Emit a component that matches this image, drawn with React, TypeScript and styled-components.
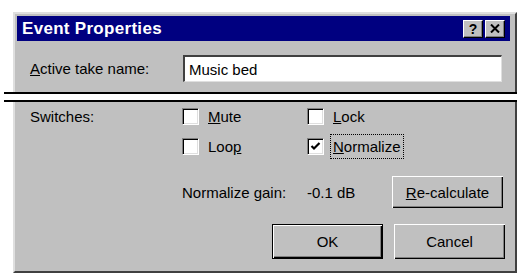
import React from 'react'
import styled, { createGlobalStyle } from 'styled-components'

const GlobalStyle = createGlobalStyle`
  html, body {
    margin: 0;
    padding: 0;
    background: #ffffff;
  }
  body {
    font-family: "Liberation Sans", Arial, sans-serif;
    font-size: 15px;
    color: #000;
  }
`

const Page = styled.div`
  width: 523px;
  height: 276px;
  padding: 12px 0 0 13px;
  box-sizing: border-box;
  overflow: hidden;
`

const Dialog = styled.div`
  width: 504px;
  display: flex;
  flex-direction: column;
`

const TopPane = styled.div`
  background: #c0c0c0;
  border-top: 2px solid #dfdfdf;
  border-left: 2px solid #dfdfdf;
  border-right: 2px solid #404040;
  padding: 2px 2px 0;
`

const TitleBar = styled.div`
  height: 25px;
  background: #000080;
  display: flex;
  align-items: center;
  justify-content: space-between;
  padding: 0 5px 0 5px;
  margin-right: 3px;
`

const Title = styled.span`
  color: #fff;
  font-weight: bold;
  font-size: 17px;
  letter-spacing: 0.3px;
`

const TitleButtons = styled.div`
  display: flex;
  gap: 2px;
`

const TitleButton = styled.div`
  width: 20px;
  height: 18px;
  box-sizing: border-box;
  background: #c0c0c0;
  border-top: 1px solid #fff;
  border-left: 1px solid #fff;
  border-right: 1px solid #000;
  border-bottom: 1px solid #000;
  box-shadow: inset -1px -1px 0 #808080;
  display: flex;
  align-items: center;
  justify-content: center;
  font-weight: bold;
  font-size: 14px;
  line-height: 1;
  color: #000;
`

const NameRow = styled.div`
  display: flex;
  align-items: center;
  padding: 14px 11px 10px 13px;
`

const FieldLabel = styled.span`
  width: 153px;
  flex: none;
`

const TextField = styled.div`
  flex: 1;
  height: 27px;
  box-sizing: border-box;
  background: #fff;
  border-top: 2px solid #404040;
  border-left: 2px solid #404040;
  border-right: 1px solid #dfdfdf;
  border-bottom: 1px solid #dfdfdf;
  display: flex;
  align-items: center;
  padding-left: 4px;
`

const Tear = styled.div`
  margin-left: -9px;
  width: 513px;
  height: 6px;
  background: #fff;
  border-top: 2px solid #000;
  border-bottom: 2px solid #000;
`

const BottomPane = styled.div`
  background: #c0c0c0;
  border-left: 2px solid #dfdfdf;
  border-right: 2px solid #404040;
  border-bottom: 2px solid #404040;
  padding: 3px 10px 12px 15px;
  display: flex;
  flex-direction: column;
`

const Grid = styled.div`
  display: grid;
  grid-template-columns: 152px 125px 85px 111px;
  grid-template-rows: 22px 22px 43px;
  row-gap: 8px;
  align-items: center;
`

const Cell = styled.div<{ $col: number; $span?: number; $bottom?: boolean }>`
  grid-column: ${(p) => p.$col} / span ${(p) => p.$span ?? 1};
  display: flex;
  align-items: center;
  align-self: ${(p) => (p.$bottom ? 'end' : 'center')};
  height: ${(p) => (p.$bottom ? '32px' : 'auto')};
`

const Check = styled.div`
  width: 17px;
  height: 17px;
  box-sizing: border-box;
  background: #fff;
  border-top: 1px solid #808080;
  border-left: 1px solid #808080;
  border-right: 1px solid #fff;
  border-bottom: 1px solid #fff;
  box-shadow: inset 1px 1px 0 #000, inset -1px -1px 0 #dfdfdf;
  display: flex;
  align-items: center;
  justify-content: center;
  flex: none;
`

const CheckLabel = styled.span<{ $focused?: boolean }>`
  margin-left: 6px;
  padding: 3px 2px;
  border: 1px dotted ${(p) => (p.$focused ? '#000' : 'transparent')};
`

const Button = styled.button<{ $default?: boolean }>`
  width: 111px;
  height: ${(p) => (p.$default ? '35px' : '32px')};
  box-sizing: border-box;
  background: #c0c0c0;
  font-family: "Liberation Sans", Arial, sans-serif;
  font-size: 15px;
  color: #000;
  padding: 0;
  border: ${(p) => (p.$default ? '1px solid #000' : 'none')};
  box-shadow: inset 1px 1px 0 #fff, inset -1px -1px 0 #000,
    inset -2px -2px 0 #808080;
`

const ButtonRow = styled.div`
  display: flex;
  justify-content: flex-end;
  align-items: flex-end;
  gap: 11px;
  margin-top: 16px;
  & > button:last-child {
    height: 35px;
  }
`

function CheckBox({ checked, label, focused }: { checked?: boolean; label: React.ReactNode; focused?: boolean }) {
  return (
    <>
      <Check>
        {checked && (
          <svg width="11" height="11" viewBox="0 0 11 11">
            <path d="M1.5 5 L4 7.5 L9.5 2" stroke="#000" strokeWidth="2.2" fill="none" />
          </svg>
        )}
      </Check>
      <CheckLabel $focused={focused}>{label}</CheckLabel>
    </>
  )
}

export default function App() {
  return (
    <>
      <GlobalStyle />
      <Page>
        <Dialog>
          <TopPane>
            <TitleBar>
              <Title>Event Properties</Title>
              <TitleButtons>
                <TitleButton>?</TitleButton>
                <TitleButton>
                  <svg width="10" height="9" viewBox="0 0 10 9">
                    <path d="M1 0.5 L9 8.5 M9 0.5 L1 8.5" stroke="#000" strokeWidth="2" />
                  </svg>
                </TitleButton>
              </TitleButtons>
            </TitleBar>
            <NameRow>
              <FieldLabel>
                <u>A</u>ctive take name:
              </FieldLabel>
              <TextField>Music bed</TextField>
            </NameRow>
          </TopPane>
          <Tear />
          <BottomPane>
            <Grid>
              <Cell $col={1}>Switches:</Cell>
              <Cell $col={2}>
                <CheckBox label={<><u>M</u>ute</>} />
              </Cell>
              <Cell $col={3} $span={2}>
                <CheckBox label={<><u>L</u>ock</>} />
              </Cell>
              <Cell $col={2}>
                <CheckBox label={<>Loo<u>p</u></>} />
              </Cell>
              <Cell $col={3} $span={2}>
                <CheckBox checked focused label={<><u>N</u>ormalize</>} />
              </Cell>
              <Cell $col={2} $bottom>Normalize gain:</Cell>
              <Cell $col={3} $bottom>-0.1 dB</Cell>
              <Cell $col={4} $bottom>
                <Button>
                  <u>R</u>e-calculate
                </Button>
              </Cell>
            </Grid>
            <ButtonRow>
              <Button $default>OK</Button>
              <Button>Cancel</Button>
            </ButtonRow>
          </BottomPane>
        </Dialog>
      </Page>
    </>
  )
}
